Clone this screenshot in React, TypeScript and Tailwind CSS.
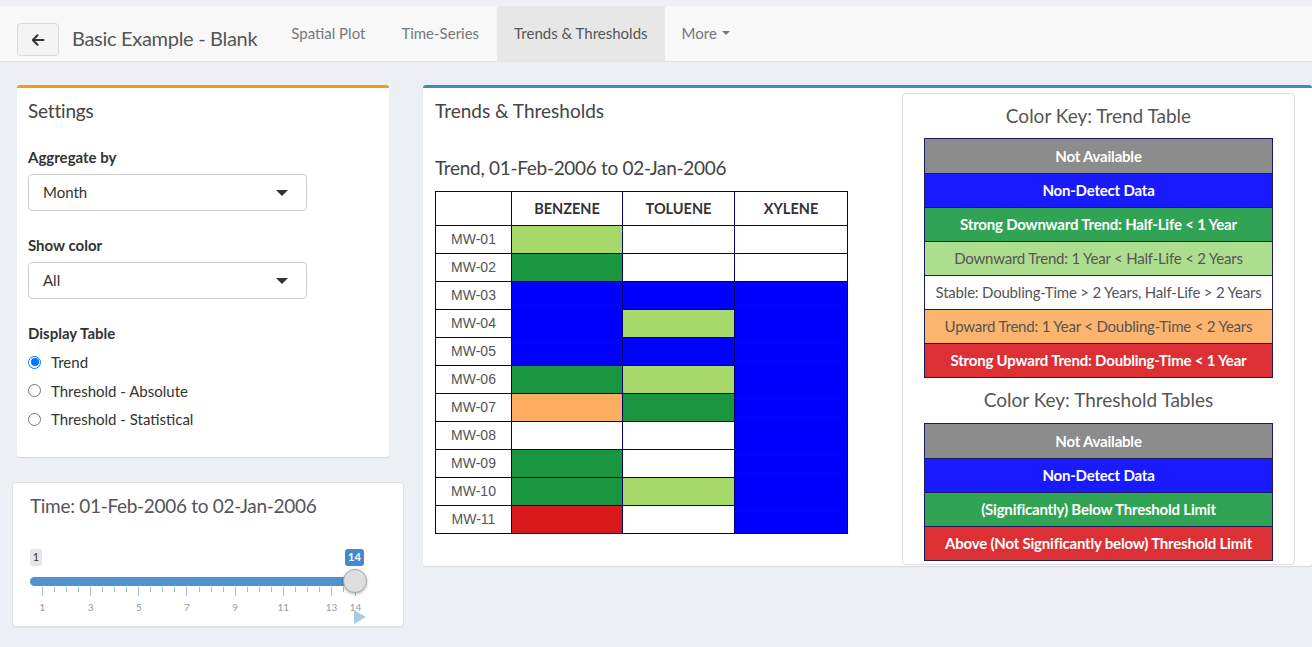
import React from "react";

const F = { fontFamily: "Lato, 'Open Sans', sans-serif" };

type C = "lg" | "g" | "b" | "w" | "o" | "r";
const cellBg: Record<C, string> = {
  lg: "bg-[#a6d96a]",
  g: "bg-[#1a9641]",
  b: "bg-[#0000ff]",
  w: "bg-white",
  o: "bg-[#fdae61]",
  r: "bg-[#d7191c]",
};

const rows: [string, C, C, C][] = [
  ["MW-01", "lg", "w", "w"],
  ["MW-02", "g", "w", "w"],
  ["MW-03", "b", "b", "b"],
  ["MW-04", "b", "lg", "b"],
  ["MW-05", "b", "b", "b"],
  ["MW-06", "g", "lg", "b"],
  ["MW-07", "o", "g", "b"],
  ["MW-08", "w", "w", "b"],
  ["MW-09", "g", "w", "b"],
  ["MW-10", "g", "lg", "b"],
  ["MW-11", "r", "w", "b"],
];

const trendKey: [string, string, string][] = [
  ["Not Available", "bg-[#8c8c8c]", "text-white font-bold"],
  ["Non-Detect Data", "bg-[#1a1aff]", "text-white font-bold"],
  ["Strong Downward Trend: Half-Life < 1 Year", "bg-[#31a354]", "text-white font-bold"],
  ["Downward Trend: 1 Year < Half-Life < 2 Years", "bg-[#addd8e]", "text-[#555]"],
  ["Stable: Doubling-Time > 2 Years, Half-Life > 2 Years", "bg-white", "text-[#555]"],
  ["Upward Trend: 1 Year < Doubling-Time < 2 Years", "bg-[#fdb46e]", "text-[#555]"],
  ["Strong Upward Trend: Doubling-Time < 1 Year", "bg-[#dc3035]", "text-white font-bold"],
];

const threshKey: [string, string, string][] = [
  ["Not Available", "bg-[#8c8c8c]", "text-white font-bold"],
  ["Non-Detect Data", "bg-[#1a1aff]", "text-white font-bold"],
  ["(Significantly) Below Threshold Limit", "bg-[#31a354]", "text-white font-bold"],
  ["Above (Not Significantly below) Threshold Limit", "bg-[#dc3035]", "text-white font-bold"],
];

function KeyTable({ items }: { items: [string, string, string][] }) {
  return (
    <div className="w-[349px] border border-[#1a1a5e] flex flex-col">
      {items.map(([t, bg, tx], i) => (
        <div
          key={i}
          className={`h-[34px] flex items-center justify-center text-[15px] tracking-[-0.2px] ${bg} ${tx} ${i > 0 ? "border-t border-[#1a1a5e]" : ""}`}
        >
          {t}
        </div>
      ))}
    </div>
  );
}

function Select({ value }: { value: string }) {
  return (
    <div className="w-[279px] h-[37px] border border-[#cccccc] rounded-[4px] bg-white flex items-center justify-between pl-[14px] pr-[18px]">
      <span className="text-[15px] text-[#333]">{value}</span>
      <div className="w-0 h-0 border-l-[6px] border-r-[6px] border-t-[6px] border-l-transparent border-r-transparent border-t-[#333]" />
    </div>
  );
}

function Radio({ label, checked }: { label: string; checked?: boolean }) {
  return (
    <label className="flex items-center h-[28.5px] gap-[10px]">
      {checked ? (
        <span className="w-[13px] h-[13px] rounded-full border border-[#0075ff] flex items-center justify-center">
          <span className="w-[8px] h-[8px] rounded-full bg-[#0075ff]" />
        </span>
      ) : (
        <span className="w-[13px] h-[13px] rounded-full border border-[#767676] bg-white" />
      )}
      <span className="text-[15px] text-[#333]">{label}</span>
    </label>
  );
}

function Slider() {
  const step = 24.08;
  const x0 = 29;
  const pos = (v: number) => x0 + (v - 1) * step;
  const labels = [1, 3, 5, 7, 9, 11, 13, 14];
  const ticks: { x: number; major: boolean }[] = [];
  for (let k = 0; k <= 26; k++) {
    const v = 1 + k / 2;
    const major = labels.includes(v);
    ticks.push({ x: pos(v), major });
  }
  return (
    <div className="relative h-[90px] w-full">
      <div className="absolute left-[17px] top-[12px] w-[12px] h-[17px] rounded-[3px] bg-[#e6e6e6] text-[11px] text-[#333] flex items-center justify-center">
        1
      </div>
      <div className="absolute left-[332px] top-[12px] w-[19px] h-[17px] rounded-[3px] bg-[#428bca] text-[11px] font-bold text-white flex items-center justify-center">
        14
      </div>
      <div className="absolute left-[17px] top-[40px] w-[325px] h-[9px] rounded-full bg-[#4f93ce]" />
      {ticks.map((t, i) => (
        <div
          key={i}
          className="absolute top-[50px] w-px bg-[#9cc0e0]"
          style={{ left: Math.round(t.x), height: t.major ? 9 : 5 }}
        />
      ))}
      {labels.map((l) => (
        <div
          key={l}
          className="absolute top-[63px] w-[20px] -ml-[10px] text-center text-[10px] text-[#9a9a9a]"
          style={{ left: pos(l) + 0.5 }}
        >
          {l}
        </div>
      ))}
      <div className="absolute left-[330px] top-[32px] w-[24px] h-[24px] rounded-full bg-[#dedede] border border-[#aaaaaa] shadow-[0_1px_3px_rgba(0,0,0,0.3)]" />
      <div className="absolute left-[341px] top-[73px] w-0 h-0 border-t-[7px] border-b-[7px] border-l-[12px] border-t-transparent border-b-transparent border-l-[#a9cbe5]" />
    </div>
  );
}

export default function App() {
  return (
    <div style={F} className="w-[1312px] h-[647px] bg-[#ecf0f5] overflow-hidden">
      <div className="h-[6px] bg-[#eef0f4]" />
      <nav className="h-[56px] bg-[#f8f8f8] border-b border-[#e3e3e3] flex items-stretch">
        <div className="flex items-start pl-[17px] pt-[17px]">
          <button className="w-[42px] h-[33px] rounded-[4px] border border-[#d9d9d9] bg-[#f4f4f4] flex items-center justify-center">
            <svg width="16" height="16" viewBox="0 0 16 16" fill="none">
              <path d="M13.5 8H3M7.5 3.2L2.8 8l4.7 4.8" stroke="#333" strokeWidth="2" strokeLinecap="round" strokeLinejoin="round" />
            </svg>
          </button>
        </div>
        <div className="ml-[13px] mr-[16px] flex items-center text-[20px] tracking-[-0.3px] text-[#555] pt-[8px]">
          Basic Example - Blank
        </div>
        <div className="flex items-stretch text-[15px] text-[#777]">
          <div className="px-[18px] flex items-center pb-[1px]">Spatial Plot</div>
          <div className="px-[18px] flex items-center pb-[1px]">Time-Series</div>
          <div className="px-[17px] flex items-center pb-[1px] bg-[#e7e7e7] text-[#555]">Trends &amp; Thresholds</div>
          <div className="px-[17px] flex items-center gap-[5px] pb-[1px]">
            More
            <span className="w-0 h-0 border-l-[4px] border-r-[4px] border-t-[4px] border-l-transparent border-r-transparent border-t-[#777]" />
          </div>
        </div>
      </nav>

      <div className="flex pt-[23px]">
        <div className="w-[423px] shrink-0 flex flex-col">
          <div className="ml-[17px] w-[372px] h-[372px] bg-white rounded-[3px] border-t-[3px] border-[#f39c12] shadow-[0_1px_1px_rgba(0,0,0,0.1)] px-[11px]">
            <div className="pt-[12px] text-[19px] tracking-[-0.2px] text-[#444] leading-[22px]">Settings</div>
            <div className="mt-[26px] text-[15px] font-bold text-[#333] leading-[18px]">Aggregate by</div>
            <div className="mt-[8px]">
              <Select value="Month" />
            </div>
            <div className="mt-[25px] text-[15px] font-bold text-[#333] leading-[18px]">Show color</div>
            <div className="mt-[8px]">
              <Select value="All" />
            </div>
            <div className="mt-[25px] text-[15px] font-bold text-[#333] leading-[18px]">Display Table</div>
            <div className="mt-[6px] flex flex-col">
              <Radio label="Trend" checked />
              <Radio label="Threshold - Absolute" />
              <Radio label="Threshold - Statistical" />
            </div>
          </div>

          <div className="ml-[12px] mt-[25px] w-[392px] h-[145px] bg-white rounded-[4px] border border-[#e0e0e0] shadow-[0_1px_1px_rgba(0,0,0,0.05)]">
            <div className="pl-[17px] pt-[12px] text-[19px] tracking-[-0.3px] text-[#555] leading-[22px]">
              Time: 01-Feb-2006 to 02-Jan-2006
            </div>
            <div className="mt-[20px]">
              <Slider />
            </div>
          </div>
        </div>

        <div className="flex-1 h-[481px] bg-white rounded-[3px] border-t-[3px] border-[#3c8dbc] shadow-[0_1px_1px_rgba(0,0,0,0.1)] flex">
          <div className="w-[479px] shrink-0 pl-[12px]">
            <div className="pt-[12px] text-[19px] text-[#444] leading-[22px]">Trends &amp; Thresholds</div>
            <div className="mt-[35px] text-[19px] tracking-[-0.3px] text-[#444] leading-[22px]">
              Trend, 01-Feb-2006 to 02-Jan-2006
            </div>
            <table className="mt-[12px] border-collapse border border-[#000066]">
              <thead>
                <tr className="h-[34px]">
                  <th className="w-[76px] border border-[#000066]" />
                  {["BENZENE", "TOLUENE", "XYLENE"].map((h, i) => (
                    <th
                      key={h}
                      className={`border border-[#000066] text-[14.5px] font-bold text-[#333] ${i === 0 ? "w-[111px]" : i === 1 ? "w-[112px]" : "w-[113px]"}`}
                    >
                      {h}
                    </th>
                  ))}
                </tr>
              </thead>
              <tbody>
                {rows.map(([n, a, b, c]) => (
                  <tr key={n} className="h-[28px]">
                    <td className="border border-[#000066] text-center text-[14px] text-[#555]" style={{ fontFamily: "'Liberation Sans', Arial, sans-serif" }}>
                      {n}
                    </td>
                    <td className={`border border-[#000066] ${cellBg[a]}`} />
                    <td className={`border border-[#000066] ${cellBg[b]}`} />
                    <td className={`border border-[#000066] ${cellBg[c]}`} />
                  </tr>
                ))}
              </tbody>
            </table>
          </div>

          <div className="mt-[5px] w-[393px] h-[472px] shrink-0 border border-[#dddddd] rounded-[4px] flex flex-col items-center">
            <div className="pt-[11px] text-[19px] text-[#555] leading-[22px]">Color Key: Trend Table</div>
            <div className="mt-[11px]">
              <KeyTable items={trendKey} />
            </div>
            <div className="mt-[11px] text-[19px] text-[#555] leading-[22px]">Color Key: Threshold Tables</div>
            <div className="mt-[12px]">
              <KeyTable items={threshKey} />
            </div>
          </div>
        </div>
      </div>
    </div>
  );
}
